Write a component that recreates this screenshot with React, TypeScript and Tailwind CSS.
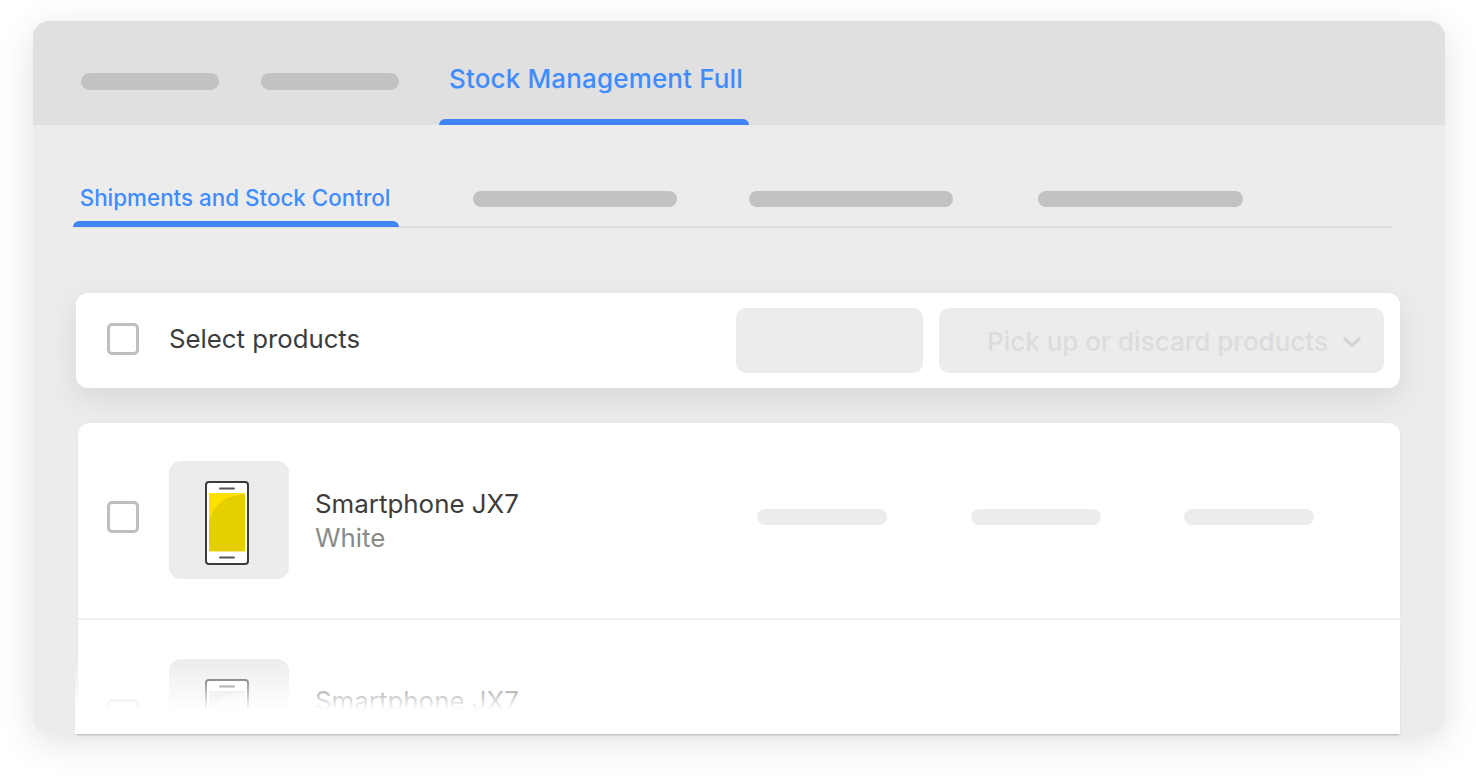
import React from "react";
import { ChevronDown } from "lucide-react";

const font = { fontFamily: '"Inter", "Liberation Sans", sans-serif' };

function Phone({ faded = false }: { faded?: boolean }) {
  return (
    <svg width="44" height="84" viewBox="0 0 44 84" fill="none">
      <rect x="1" y="1" width="42" height="82" rx="3" fill="#fff" stroke="#3c3c3c" strokeWidth="2" />
      <rect x="14" y="6.5" width="16" height="2" rx="1" fill="#555" />
      <rect x="14" y="75.5" width="16" height="2" rx="1" fill="#555" />
      <rect x="4" y="12" width="36" height="59" fill={faded ? "#d8d8d8" : "#ffe100"} />
      <path d="M4 71V44C4 27 20 13 40 13.5V70H4Z" fill={faded ? "#eeeeee" : "#e5cf00"} />
      <rect x="4" y="70" width="36" height="1" fill={faded ? "#f2f2f2" : "#f6ec8c"} />
    </svg>
  );
}

function Check() {
  return <div className="w-8 h-8 shrink-0 rounded-[5px] border-[3.5px] border-[#bfbfbf] bg-white" />;
}

function Pill({ w, color = "bg-[#c2c2c2]" }: { w: string; color?: string }) {
  return <div className={`h-4 rounded-full ${w} ${color}`} />;
}

export default function App() {
  return (
    <div className="w-[1476px] h-[778px] bg-white overflow-hidden pt-[21px] pl-[33px]" style={font}>
      <div className="w-[1412px] h-[713px] flex flex-col rounded-2xl bg-[#ececec] shadow-[0_8px_36px_rgba(0,0,0,0.12)]">
        {/* Top tabs */}
        <div className="h-[104px] shrink-0 flex items-stretch rounded-t-2xl bg-[#e0e0e0] pl-12">
          <div className="flex items-center gap-[42px] pt-[17px]">
            <div className="h-[17px] w-[138px] rounded-full bg-[#c2c2c2]" />
            <div className="h-[17px] w-[138px] rounded-full bg-[#c2c2c2]" />
          </div>
          <div className="ml-10 w-[310px] flex flex-col">
            <div className="flex-1 flex items-center justify-center pt-4 pl-1 text-[26px] tracking-[0.15px] font-medium text-[#3f8cff] whitespace-nowrap">
              Stock Management Full
            </div>
            <div className="h-[6px] rounded-t-md bg-[#4285f4]" />
          </div>
        </div>

        {/* Body */}
        <div className="flex-1 relative flex flex-col min-h-0">
          {/* Sub tabs */}
          <div className="ml-10 w-[1320px] h-[103px] shrink-0 flex border-b-2 border-[#dedede]">
            <div className="w-[326px] h-[102px] flex flex-col">
              <div className="flex-1 flex items-end justify-center pb-[6px] pr-[2px] text-[22.4px] font-medium text-[#3f8cff] whitespace-nowrap">
                Shipments and Stock Control
              </div>
              <div className="h-[6px] rounded-t-md bg-[#4285f4]" />
            </div>
            <div className="ml-[74px] pt-[66px] flex items-start">
              <Pill w="w-[204px]" />
              <div className="ml-[72px]"><Pill w="w-[204px]" /></div>
              <div className="ml-[85px]"><Pill w="w-[205px]" /></div>
            </div>
          </div>

          {/* Toolbar */}
          <div className="ml-[43px] mt-[65px] w-[1324px] h-[95px] shrink-0 flex items-center rounded-xl bg-white pl-[31px] pr-4 shadow-[0_10px_30px_rgba(0,0,0,0.09)]">
            <div className="mb-[3px]"><Check /></div>
            <span className="ml-[30px] mb-[3px] text-[25.75px] text-[#3c3c3c] whitespace-nowrap">Select products</span>
            <div className="ml-auto w-[187px] h-[65px] rounded-[10px] bg-[#ececec]" />
            <div className="ml-4 w-[445px] h-[65px] rounded-[10px] bg-[#ececec] flex items-center pl-12 pr-[17px] pt-[2px]">
              <span className="text-[26px] font-medium text-[#dcdcdc] whitespace-nowrap">Pick up or discard products</span>
              <ChevronDown className="ml-auto text-[#d0d0d0]" size={30} strokeWidth={2} />
            </div>
          </div>

          {/* List */}
          <div className="ml-[45px] mt-[35px] w-[1322px] flex-1 min-h-0 rounded-t-xl bg-white shadow-[0_1px_3px_rgba(0,0,0,0.06)]">
            <div className="h-[197px] flex items-start border-b-2 border-[#efefef] -mr-[2px] pr-[2px] pl-[29px]">
              <div className="mt-[78px]"><Check /></div>
              <div className="ml-[30px] mt-[38px] w-[120px] h-[118px] rounded-xl bg-[#ececec] flex items-center justify-center pr-1 pt-[6px]">
                <Phone />
              </div>
              <div className="ml-[26px] mt-[64px] flex flex-col leading-[34px] text-[25.9px] whitespace-nowrap">
                <span className="text-[#3c3c3c]">Smartphone JX7</span>
                <span className="text-[#8a8a8a]">White</span>
              </div>
              <div className="ml-auto mr-[86px] mt-[86px] flex gap-[83.5px]">
                <Pill w="w-[130px]" color="bg-[#ececec]" />
                <Pill w="w-[130px]" color="bg-[#ececec]" />
                <Pill w="w-[130px]" color="bg-[#ececec]" />
              </div>
            </div>
            <div className="h-[114px] overflow-hidden flex items-start pl-[29px]">
              <div className="mt-[79px]"><Check /></div>
              <div className="ml-[30px] mt-[39px] w-[120px] h-[118px] rounded-xl bg-[#ececec] flex items-center justify-center pr-1 pt-[6px]">
                <Phone faded />
              </div>
              <div className="ml-[26px] mt-[64px] leading-[34px] text-[25.9px] text-[#3c3c3c] whitespace-nowrap">Smartphone JX7</div>
            </div>
          </div>

          {/* Fade over the list */}
          <div className="absolute left-[42px] w-[1325px] bottom-0 h-[76px] bg-gradient-to-b from-transparent via-white via-[68%] to-white shadow-[0_2px_2px_-1px_rgba(0,0,0,0.2)]" />
        </div>
      </div>
    </div>
  );
}
